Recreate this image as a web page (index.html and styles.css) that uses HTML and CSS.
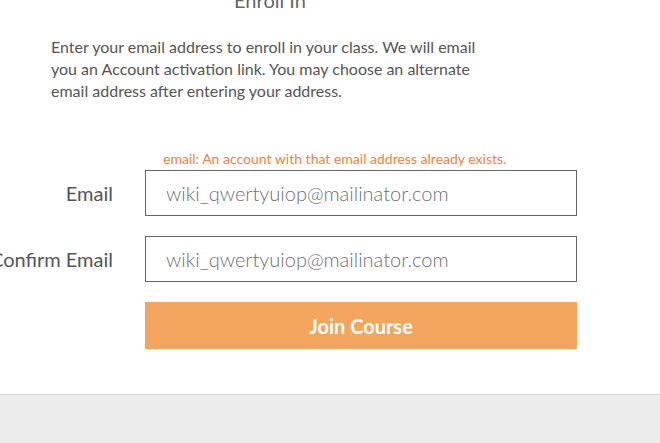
FILE: index.html
```html
<!DOCTYPE html>
<html>
<head>
<meta charset="utf-8">
<link rel="stylesheet" href="styles.css">
</head>
<body>
<main class="enroll">
  <h2 class="title">Enroll In</h2>
  <p class="intro">Enter your email address to enroll in your class. We will email you an Account activation link. You may choose an alternate email address after entering your address.</p>
  <form class="form">
    <div class="row row-error">
      <span></span>
      <div class="error">email: An account with that email address already exists.</div>
    </div>
    <div class="row">
      <label class="label" for="email">Email</label>
      <input class="field" id="email" type="text" value="wiki_qwertyuiop@mailinator.com">
    </div>
    <div class="row">
      <label class="label" for="confirm">Confirm Email</label>
      <input class="field" id="confirm" type="text" value="wiki_qwertyuiop@mailinator.com">
    </div>
    <div class="row">
      <span></span>
      <button class="submit" type="button">Join Course</button>
    </div>
  </form>
</main>
<footer class="footer"></footer>
</body>
</html>
```

FILE: styles.css
```css
html, body {
  margin: 0;
  padding: 0;
  height: 100%;
  overflow: hidden;
}
body {
  font-family: Lato, "Open Sans", sans-serif;
  color: #555;
  background: #fff;
  display: flex;
  flex-direction: column;
}
.enroll {
  padding: 0 0 45px 0;
  flex: none;
}
.title {
  margin: -12px 0 0 0;
  width: 540px;
  text-align: center;
  font-size: 20px;
  line-height: 24px;
  font-weight: 400;
  color: #666;
}
.intro {
  margin: 24px 0 0 51px;
  width: 440px;
  font-size: 16px;
  line-height: 22px;
  color: #555;
}
.form {
  margin: 49px 0 0 0;
}
.row {
  display: grid;
  grid-template-columns: 113px 432px;
  column-gap: 32px;
  align-items: center;
}
.row + .row {
  margin-top: 20px;
}
.row-error + .row {
  margin-top: 3px;
}
.error {
  font-size: 14px;
  line-height: 16px;
  color: #f4823a;
  margin-left: 18px;
  white-space: nowrap;
}
.label {
  display: flex;
  justify-content: flex-end;
  white-space: nowrap;
  font-size: 20px;
  color: #555;
}
.field {
  box-sizing: border-box;
  height: 46px;
  width: 432px;
  border: 1px solid #666;
  border-radius: 0;
  padding: 0 0 0 20px;
  margin: 0;
  font-family: Lato, sans-serif;
  font-weight: 300;
  font-size: 20px;
  color: #6e6e78;
  background: #fff;
  outline: none;
}
.submit {
  height: 47px;
  width: 432px;
  border: none;
  border-radius: 0;
  margin: 0;
  background: #f4a55d;
  color: #fff;
  font-family: Lato, sans-serif;
  font-weight: 700;
  font-size: 20px;
}
.footer {
  flex: 1;
  background: #ececec;
  border-top: 1px solid #d3dbdb;
}
```
